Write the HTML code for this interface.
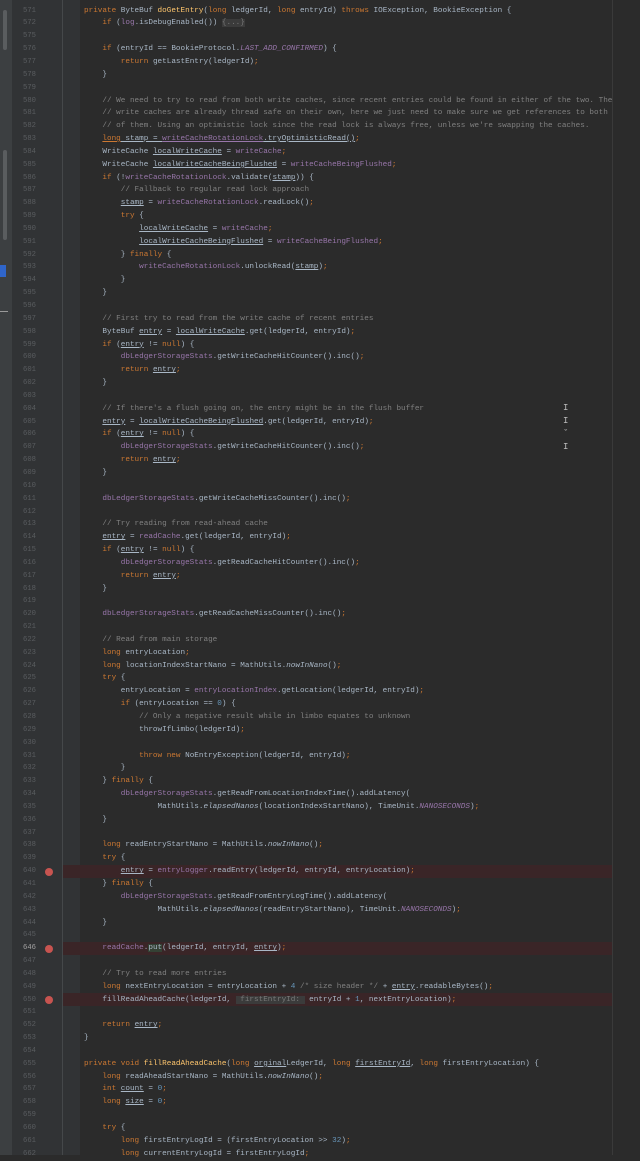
<!DOCTYPE html>
<html><head><meta charset="utf-8">
<style>
html,body{margin:0;padding:0;}
body{width:640px;height:1155px;background:#2b2b2b;position:relative;overflow:hidden;font-family:"Liberation Mono",monospace;}
#strip{position:absolute;left:0;top:0;width:12px;height:1155px;background:#3c3f41;}
#gut{position:absolute;left:12px;top:0;width:68px;height:1155px;background:#313335;}
#fold{position:absolute;left:62px;top:0;width:1px;height:1155px;background:#45484a;}
#margin{position:absolute;left:612px;top:0;width:1px;height:1155px;background:#3a3a3a;}
.bp{position:absolute;left:63px;width:549px;height:12.84px;background:#3a2527;}
.dot{position:absolute;left:45px;width:8px;height:8px;border-radius:50%;background:#c75450;}
.ln{position:absolute;left:14px;width:22px;text-align:right;font-size:7.2px;color:#5a5d60;line-height:12.84px;}
.code{position:absolute;left:84px;font-size:7.67px;line-height:12.84px;color:#a9b7c6;white-space:pre;}
.k{color:#cc7832}.f{color:#9876aa}.m{color:#ffc66d}.c{color:#808080}.n{color:#6897bb}.i{font-style:italic}.u{text-decoration:underline}
.h{color:#787878;background:#3b3b3b}
.sb{position:absolute;left:3px;width:4px;background:#5a5d5f;border-radius:2px;}
</style></head><body>
<div id="strip"></div>
<div class="sb" style="top:10px;height:40px"></div>
<div class="sb" style="top:150px;height:90px"></div>
<div style="position:absolute;left:0;top:265px;width:6px;height:12px;background:#2f65ca"></div>
<div style="position:absolute;left:0;top:311px;width:8px;height:1px;background:#999"></div>
<div id="gut"></div>
<div id="fold"></div>
<div id="margin"></div>
<div class="bp" style="top:865px"></div>
<div class="bp" style="top:942px"></div>
<div class="bp" style="top:993px"></div>
<div class="dot" style="top:867.5px"></div>
<div class="dot" style="top:944.5px"></div>
<div class="dot" style="top:995.5px"></div>
<div class="ln" style="top:4.6px">571<br>572<br>575<br>576<br>577<br>578<br>579<br>580<br>581<br>582<br>583<br>584<br>585<br>586<br>587<br>588<br>589<br>590<br>591<br>592<br>593<br>594<br>595<br>596<br>597<br>598<br>599<br>600<br>601<br>602<br>603<br>604<br>605<br>606<br>607<br>608<br>609<br>610<br>611<br>612<br>613<br>614<br>615<br>616<br>617<br>618<br>619<br>620<br>621<br>622<br>623<br>624<br>625<br>626<br>627<br>628<br>629<br>630<br>631<br>632<br>633<br>634<br>635<br>636<br>637<br>638<br>639<br>640<br>641<br>642<br>643<br>644<br>645<br><span style="color:#a4a3a3">646</span><br>647<br>648<br>649<br>650<br>651<br>652<br>653<br>654<br>655<br>656<br>657<br>658<br>659<br>660<br>661<br>662</div>
<div class="code" style="top:4.6px"><span class="k">private</span> ByteBuf <span class="m">doGetEntry</span>(<span class="k">long</span> ledgerId, <span class="k">long</span> entryId) <span class="k">throws</span> IOException, BookieException {
    <span class="k">if</span> (<span class="f">log</span>.isDebugEnabled()) <span class="h">{...}</span>

    <span class="k">if</span> (entryId == BookieProtocol.<span class="f i">LAST_ADD_CONFIRMED</span>) {
        <span class="k">return</span> getLastEntry(ledgerId)<span class="k">;</span>
    }

    <span class="c">// We need to try to read from both write caches, since recent entries could be found in either of the two. The</span>
    <span class="c">// write caches are already thread safe on their own, here we just need to make sure we get references to both</span>
    <span class="c">// of them. Using an optimistic lock since the read lock is always free, unless we're swapping the caches.</span>
    <span class="k u">long</span><span class="u"> stamp = </span><span class="f u">writeCacheRotationLock</span><span class="u">.tryOptimisticRead()</span><span class="k">;</span>
    WriteCache <span class="u">localWriteCache</span> = <span class="f">writeCache</span><span class="k">;</span>
    WriteCache <span class="u">localWriteCacheBeingFlushed</span> = <span class="f">writeCacheBeingFlushed</span><span class="k">;</span>
    <span class="k">if</span> (!<span class="f">writeCacheRotationLock</span>.validate(<span class="u">stamp</span>)) {
        <span class="c">// Fallback to regular read lock approach</span>
        <span class="u">stamp</span> = <span class="f">writeCacheRotationLock</span>.readLock()<span class="k">;</span>
        <span class="k">try</span> {
            <span class="u">localWriteCache</span> = <span class="f">writeCache</span><span class="k">;</span>
            <span class="u">localWriteCacheBeingFlushed</span> = <span class="f">writeCacheBeingFlushed</span><span class="k">;</span>
        } <span class="k">finally</span> {
            <span class="f">writeCacheRotationLock</span>.unlockRead(<span class="u">stamp</span>)<span class="k">;</span>
        }
    }

    <span class="c">// First try to read from the write cache of recent entries</span>
    ByteBuf <span class="u">entry</span> = <span class="u">localWriteCache</span>.get(ledgerId, entryId)<span class="k">;</span>
    <span class="k">if</span> (<span class="u">entry</span> != <span class="k">null</span>) {
        <span class="f">dbLedgerStorageStats</span>.getWriteCacheHitCounter().inc()<span class="k">;</span>
        <span class="k">return</span> <span class="u">entry</span><span class="k">;</span>
    }

    <span class="c">// If there's a flush going on, the entry might be in the flush buffer</span>
    <span class="u">entry</span> = <span class="u">localWriteCacheBeingFlushed</span>.get(ledgerId, entryId)<span class="k">;</span>
    <span class="k">if</span> (<span class="u">entry</span> != <span class="k">null</span>) {
        <span class="f">dbLedgerStorageStats</span>.getWriteCacheHitCounter().inc()<span class="k">;</span>
        <span class="k">return</span> <span class="u">entry</span><span class="k">;</span>
    }

    <span class="f">dbLedgerStorageStats</span>.getWriteCacheMissCounter().inc()<span class="k">;</span>

    <span class="c">// Try reading from read-ahead cache</span>
    <span class="u">entry</span> = <span class="f">readCache</span>.get(ledgerId, entryId)<span class="k">;</span>
    <span class="k">if</span> (<span class="u">entry</span> != <span class="k">null</span>) {
        <span class="f">dbLedgerStorageStats</span>.getReadCacheHitCounter().inc()<span class="k">;</span>
        <span class="k">return</span> <span class="u">entry</span><span class="k">;</span>
    }

    <span class="f">dbLedgerStorageStats</span>.getReadCacheMissCounter().inc()<span class="k">;</span>

    <span class="c">// Read from main storage</span>
    <span class="k">long</span> entryLocation<span class="k">;</span>
    <span class="k">long</span> locationIndexStartNano = MathUtils.<span class="i">nowInNano</span>()<span class="k">;</span>
    <span class="k">try</span> {
        entryLocation = <span class="f">entryLocationIndex</span>.getLocation(ledgerId, entryId)<span class="k">;</span>
        <span class="k">if</span> (entryLocation == <span class="n">0</span>) {
            <span class="c">// Only a negative result while in limbo equates to unknown</span>
            throwIfLimbo(ledgerId)<span class="k">;</span>

            <span class="k">throw new</span> NoEntryException(ledgerId, entryId)<span class="k">;</span>
        }
    } <span class="k">finally</span> {
        <span class="f">dbLedgerStorageStats</span>.getReadFromLocationIndexTime().addLatency(
                MathUtils.<span class="i">elapsedNanos</span>(locationIndexStartNano), TimeUnit.<span class="f i">NANOSECONDS</span>)<span class="k">;</span>
    }

    <span class="k">long</span> readEntryStartNano = MathUtils.<span class="i">nowInNano</span>()<span class="k">;</span>
    <span class="k">try</span> {
        <span class="u">entry</span> = <span class="f">entryLogger</span>.readEntry(ledgerId, entryId, entryLocation)<span class="k">;</span>
    } <span class="k">finally</span> {
        <span class="f">dbLedgerStorageStats</span>.getReadFromEntryLogTime().addLatency(
                MathUtils.<span class="i">elapsedNanos</span>(readEntryStartNano), TimeUnit.<span class="f i">NANOSECONDS</span>)<span class="k">;</span>
    }

    <span class="f">readCache</span>.<span style="background:#344134">put</span>(ledgerId, entryId, <span class="u">entry</span>)<span class="k">;</span>

    <span class="c">// Try to read more entries</span>
    <span class="k">long</span> nextEntryLocation = entryLocation + <span class="n">4</span> <span class="c">/* size header */</span> + <span class="u">entry</span>.readableBytes()<span class="k">;</span>
    fillReadAheadCache(ledgerId, <span class="h"> firstEntryId: </span> entryId + <span class="n">1</span>, nextEntryLocation)<span class="k">;</span>

    <span class="k">return</span> <span class="u">entry</span><span class="k">;</span>
}

<span class="k">private void</span> <span class="m">fillReadAheadCache</span>(<span class="k">long</span> <span class="u">orginal</span>LedgerId, <span class="k">long</span> <span class="u">firstEntryId</span>, <span class="k">long</span> firstEntryLocation) {
    <span class="k">long</span> readAheadStartNano = MathUtils.<span class="i">nowInNano</span>()<span class="k">;</span>
    <span class="k">int</span> <span class="u">count</span> = <span class="n">0</span><span class="k">;</span>
    <span class="k">long</span> <span class="u">size</span> = <span class="n">0</span><span class="k">;</span>

    <span class="k">try</span> {
        <span class="k">long</span> firstEntryLogId = (firstEntryLocation &gt;&gt; <span class="n">32</span>)<span class="k">;</span>
        <span class="k">long</span> currentEntryLogId = firstEntryLogId<span class="k">;</span></div>
<div style="position:absolute;left:563px;top:402px;color:#bbb;font-size:9px;font-family:'Liberation Mono',monospace;line-height:13px">I<br>I<br>ˇ<br>I</div>
</body></html>
